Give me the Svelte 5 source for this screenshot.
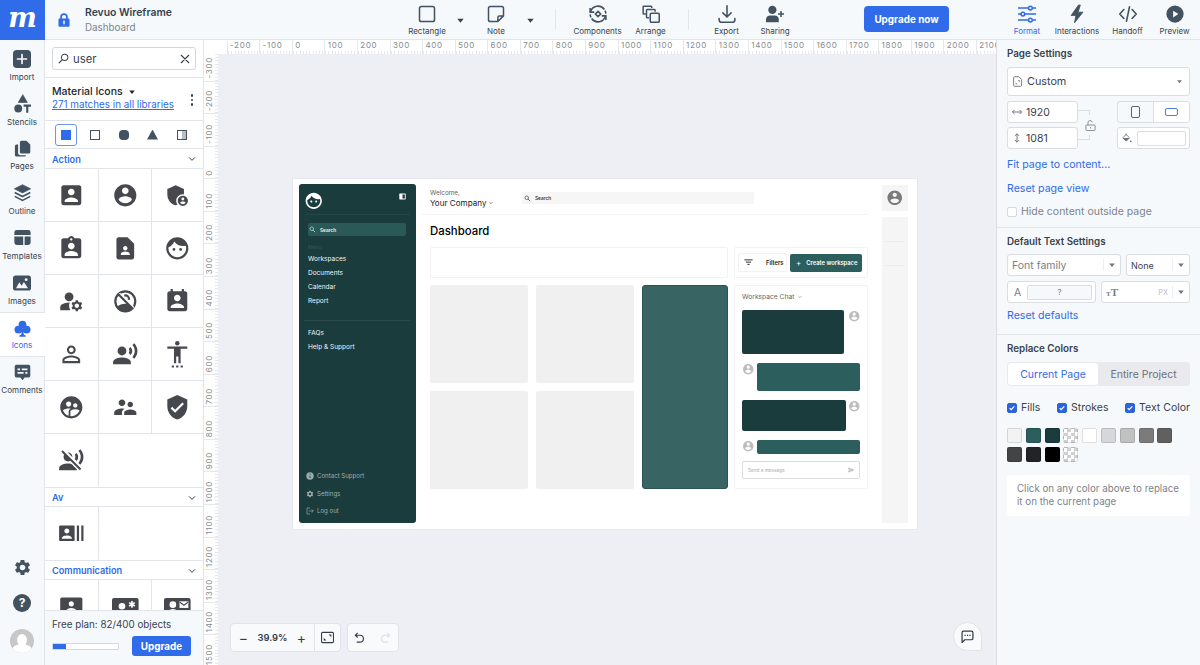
<script lang="ts">
  const icons: Record<string, string> = {
    accountBox:
      '<path d="M3 5v14c0 1.1.89 2 2 2h14c1.1 0 2-.9 2-2V5c0-1.1-.9-2-2-2H5c-1.11 0-2 .9-2 2zm12 4c0 1.66-1.34 3-3 3s-3-1.34-3-3 1.34-3 3-3 3 1.34 3 3zm-9 8c0-2 4-3.1 6-3.1s6 1.1 6 3.1v1H6v-1z"/>',
    accountCircle:
      '<path d="M12 2C6.48 2 2 6.48 2 12s4.48 10 10 10 10-4.48 10-10S17.52 2 12 2zm0 3c1.66 0 3 1.34 3 3s-1.34 3-3 3-3-1.34-3-3 1.34-3 3-3zm0 14.2c-2.5 0-4.71-1.28-6-3.22.03-1.99 4-3.08 6-3.08 1.99 0 5.97 1.09 6 3.08-1.29 1.94-3.5 3.22-6 3.22z"/>',
    adminPanel:
      '<path d="M17 11c.34 0 .67.04 1 .09V6.27L10.5 3 3 6.27v4.91c0 4.54 3.2 8.79 7.5 9.82.55-.13 1.08-.32 1.6-.55-.69-.98-1.1-2.17-1.1-3.45 0-3.31 2.69-6 6-6z"/><path d="M17 12.4c-2.54 0-4.6 2.06-4.6 4.6s2.06 4.6 4.6 4.6 4.6-2.06 4.6-4.6-2.06-4.6-4.6-4.6zm0 1.7c.72 0 1.3.6 1.3 1.3s-.58 1.3-1.3 1.3-1.3-.58-1.3-1.3.58-1.3 1.3-1.3zm0 5.9c-1.05 0-1.97-.5-2.5-1.3.05-.8 1.7-1.2 2.5-1.2s2.45.4 2.5 1.2c-.53.8-1.45 1.3-2.5 1.3z"/>',
    assignmentInd:
      '<path d="M19 3h-4.18C14.4 1.84 13.3 1 12 1c-1.3 0-2.4.84-2.82 2H5c-1.1 0-2 .9-2 2v14c0 1.1.9 2 2 2h14c1.1 0 2-.9 2-2V5c0-1.1-.9-2-2-2zm-7 0c.55 0 1 .45 1 1s-.45 1-1 1-1-.45-1-1 .45-1 1-1zm0 4c1.66 0 3 1.34 3 3s-1.34 3-3 3-3-1.34-3-3 1.34-3 3-3zm6 12H6v-1.4c0-2 4-3.1 6-3.1s6 1.1 6 3.1V19z"/>',
    contactPage:
      '<path d="M14 2H6c-1.1 0-2 .9-2 2v16c0 1.1.89 2 1.99 2H18c1.1 0 2-.9 2-2V8l-6-6zm-2 8c1.1 0 2 .9 2 2s-.9 2-2 2-2-.9-2-2 .9-2 2-2zm4 8H8v-.57c0-.81.48-1.53 1.22-1.85.85-.37 1.79-.58 2.78-.58.99 0 1.93.21 2.78.58.74.32 1.22 1.04 1.22 1.85V18z"/>',
    face:
      '<path d="M9 11.75c-.69 0-1.25.56-1.25 1.25s.56 1.25 1.25 1.25 1.25-.56 1.25-1.25-.56-1.25-1.25-1.25zm6 0c-.69 0-1.25.56-1.25 1.25s.56 1.25 1.25 1.25 1.25-.56 1.25-1.25-.56-1.25-1.25-1.25zM12 2C6.48 2 2 6.48 2 12s4.48 10 10 10 10-4.48 10-10S17.52 2 12 2zm0 18c-4.41 0-8-3.59-8-8 0-.29.02-.58.05-.86 2.36-1.05 4.23-2.98 5.21-5.37C11.07 8.33 14.05 10 17.42 10c.78 0 1.53-.09 2.25-.26.21.71.33 1.47.33 2.26 0 4.41-3.59 8-8 8z"/>',
    manageAccounts:
      '<circle cx="10" cy="8" r="4"/><path d="M10.67 13.02C10.45 13.01 10.23 13 10 13c-2.42 0-4.68.67-6.61 1.82C2.51 15.34 2 16.32 2 17.35V20h9.26c-.79-1.13-1.26-2.51-1.26-4 0-1.07.25-2.07.67-2.98zM20.75 16c0-.22-.03-.42-.06-.63l1.14-1.01-1-1.73-1.45.49c-.32-.27-.68-.48-1.08-.63L18 11h-2l-.3 1.49c-.4.15-.76.36-1.08.63l-1.45-.49-1 1.73 1.14 1.01c-.03.21-.06.41-.06.63s.03.42.06.63l-1.14 1.01 1 1.73 1.45-.49c.32.27.68.48 1.08.63L16 21h2l.3-1.49c.4-.15.76-.36 1.08-.63l1.45.49 1-1.73-1.14-1.01c.03-.21.06-.41.06-.63zM17 18c-1.1 0-2-.9-2-2s.9-2 2-2 2 .9 2 2-.9 2-2 2z"/>',
    noAccounts:
      '<circle cx="12" cy="12" r="9" fill="none" stroke="currentColor" stroke-width="2"/><path d="M4.6 17.2C6.5 15.4 9 14.3 12 14.3c1 0 1.9.1 2.8.3l3.7 3.7c-1.5 1.9-3.900 3-6.500 3-3 0-5.700-1.600-7.400-4.100z"/><path d="M11.1 6.900c2.400-.9 4.700 1.300 4 3.800" fill="none" stroke="currentColor" stroke-width="1.9"/><path d="M6.6 4.800l13 13" stroke="#fff" stroke-width="1.7"/><path d="M5.2 5.200l13.600 13.600" stroke="currentColor" stroke-width="2"/>',
    contactCalendar:
      '<path d="M19 3h-1V1h-2v2H8V1H6v2H5c-1.11 0-2 .9-2 2v14c0 1.1.89 2 2 2h14c1.1 0 2-.9 2-2V5c0-1.1-.9-2-2-2zm-7 3c1.66 0 3 1.34 3 3s-1.34 3-3 3-3-1.34-3-3 1.34-3 3-3zm6 12H6v-1c0-2 4-3.1 6-3.1s6 1.1 6 3.1v1z"/>',
    identity:
      '<path d="M12 5.9c1.16 0 2.1.94 2.1 2.1s-.94 2.1-2.1 2.1S9.9 9.16 9.9 8s.94-2.1 2.1-2.1m0 9c2.97 0 6.1 1.46 6.1 2.1v1.1H5.9V17c0-.64 3.13-2.1 6.1-2.1M12 4C9.79 4 8 5.79 8 8s1.79 4 4 4 4-1.79 4-4-1.79-4-4-4zm0 9c-2.67 0-8 1.34-8 4v3h16v-3c0-2.66-5.33-4-8-4z"/>',
    voiceOver:
      '<circle cx="9" cy="9" r="4"/><path d="M9 15c-2.67 0-8 1.34-8 4v2h16v-2c0-2.66-5.33-4-8-4zm7.76-9.64l-1.68 1.69c.84 1.18.84 2.71 0 3.89l1.68 1.69c2.02-2.02 2.02-5.07 0-7.27zM20.07 2l-1.63 1.63c2.77 3.02 2.77 7.56 0 10.74L20.07 16c3.9-3.89 3.91-9.95 0-14z"/>',
    accessibility:
      '<circle cx="12" cy="2" r="2"/><path d="M21 5H3v2h6v13h2v-6h2v6h2V7h6V5zM7 24h2v-2H7v2zm4 0h2v-2h-2v2zm4 0h2v-2h-2v2z"/>',
    supervised:
      '<path d="M11.99 2c-5.52 0-10 4.48-10 10s4.48 10 10 10 10-4.48 10-10-4.48-10-10-10zm3.61 6.34c1.07 0 1.93.86 1.93 1.93s-.86 1.93-1.93 1.93-1.93-.86-1.93-1.93c-.01-1.07.86-1.93 1.93-1.93zm-6-1.58c1.3 0 2.36 1.06 2.36 2.36s-1.06 2.36-2.36 2.36-2.36-1.06-2.36-2.36c0-1.31 1.05-2.36 2.36-2.36zm0 9.13v3.75c-2.4-.75-4.3-2.6-5.14-4.96 1.05-1.12 3.67-1.69 5.14-1.69.53 0 1.2.08 1.9.22-1.64.87-1.9 2.02-1.9 2.68zM11.99 20c-.27 0-.53-.01-.79-.04v-4.07c0-1.42 2.94-2.13 4.4-2.13 1.07 0 2.92.39 3.84 1.15-1.17 2.97-4.06 5.09-7.45 5.09z"/>',
    supervisor:
      '<path d="M16.5 12c1.38 0 2.49-1.12 2.49-2.5S17.88 7 16.5 7 14 8.12 14 9.5s1.12 2.5 2.5 2.5zM9 11c1.66 0 2.99-1.34 2.99-3S10.66 5 9 5 6 6.34 6 8s1.34 3 3 3zm7.5 3c-1.83 0-5.5.92-5.5 2.75V19h11v-2.25c0-1.83-3.67-2.75-5.5-2.75zM9 13c-2.33 0-7 1.17-7 3.5V19h7v-2.25c0-.85.33-2.34 2.37-3.47C10.5 13.1 9.66 13 9 13z"/>',
    verified:
      '<path d="M12 1L3 5v6c0 5.55 3.84 10.74 9 12 5.16-1.26 9-6.45 9-12V5l-9-4zm-2 16l-4-4 1.41-1.41L10 14.17l6.59-6.59L18 9l-8 8z"/>',
    voiceOff:
      '<path d="M9 5a4 4 0 0 1 4 4v.2L8.8 5zM6.89 5.62L4.27 3 3 4.27l2.62 2.62C5.23 7.5 5 8.22 5 9c0 2.21 1.79 4 4 4 .78 0 1.5-.23 2.11-.62L19.73 21 21 19.73l-8.62-8.62zM9 15c-2.67 0-8 1.34-8 4v2h16v-1l-4.5-4.5C11.2 15.1 10 15 9 15zm7.76-9.64l-1.68 1.69c.84 1.18.84 2.71 0 3.89l1.68 1.69c2.02-2.02 2.02-5.07 0-7.27zM20.07 2l-1.63 1.63c2.77 3.02 2.77 7.56 0 10.74L20.07 16c3.9-3.89 3.91-9.95 0-14z"/>',
    recentActors:
      '<path d="M21 5v14h2V5h-2zm-4 14h2V5h-2v14zM14 5H2c-.55 0-1 .45-1 1v12c0 .55.45 1 1 1h12c.55 0 1-.45 1-1V6c0-.55-.45-1-1-1zM8 7.75c1.24 0 2.25 1.01 2.25 2.25S9.24 12.25 8 12.25 5.75 11.24 5.75 10 6.76 7.75 8 7.75zM12.5 17h-9v-.75c0-1.5 3-2.25 4.5-2.25s4.5.75 4.5 2.25V17z"/>',
    contacts:
      '<rect x="2" y="4" width="20" height="16" rx="1.5"/><circle cx="12" cy="9.8" r="2.3" fill="#fff"/><path d="M7.5 17v-1.200c0-1.500 3-2.300 4.500-2.300s4.500.8 4.500 2.300V17z" fill="#fff"/>',
    contactEmergency:
      '<rect x="0" y="4.500" width="24" height="17" rx="1.8"/><circle cx="9" cy="12" r="3" fill="#fff"/><path d="M3 20c0-2.500 4-4 6-4s6 1.500 6 4z" fill="#fff"/><path d="M18 7.200v6M15.400 8.700l5.200 3M20.600 8.700l-5.200 3" stroke="#fff" stroke-width="1.5"/>',
    contactMail:
      '<rect x="0" y="4.500" width="24" height="17" rx="1.8"/><circle cx="8" cy="10.500" r="3" fill="#fff"/><path d="M2 18.500c0-2.500 4-4 6-4s6 1.500 6 4z" fill="#fff"/><path d="M14 7.500h8v6h-8z" fill="#fff"/><path d="M14.400 8.300l3.600 2.700 3.600-2.700" fill="none" stroke="#46484d"/>',
    gear:
      '<path d="M19.14 12.94c.04-.3.06-.61.06-.94 0-.32-.02-.64-.07-.94l2.03-1.58c.18-.14.23-.41.12-.61l-1.92-3.32c-.12-.22-.37-.29-.59-.22l-2.39.96c-.5-.38-1.03-.7-1.62-.94l-.36-2.54c-.04-.24-.24-.41-.48-.41h-3.84c-.24 0-.43.17-.47.41l-.36 2.54c-.59.24-1.13.57-1.62.94l-2.39-.96c-.22-.08-.47 0-.59.22L2.74 8.87c-.12.21-.08.47.12.61l2.03 1.58c-.05.3-.09.63-.09.94s.02.64.07.94l-2.03 1.58c-.18.14-.23.41-.12.61l1.92 3.32c.12.22.37.29.59.22l2.39-.96c.5.38 1.03.7 1.62.94l.36 2.54c.05.24.24.41.48.41h3.84c.24 0 .44-.17.47-.41l.36-2.54c.59-.24 1.13-.56 1.62-.94l2.39.96c.22.08.47 0 .59-.22l1.92-3.32c.12-.22.07-.47-.12-.61l-2.01-1.58zM12 15.6c-1.98 0-3.6-1.62-3.6-3.6s1.62-3.6 3.6-3.6 3.6 1.62 3.6 3.6-1.62 3.6-3.6 3.6z"/>',
    info: '<circle cx="12" cy="12" r="11"/><path d="M12 5v3M12 11v7" stroke="#1b3c3d" stroke-width="2.5"/>',
    logout: '<path d="M12 3H3v18h9M8 12h14M17 7l5 5-5 5" fill="none" stroke="currentColor" stroke-width="2"/>',
    search:
      '<circle cx="9.5" cy="9.5" r="6" fill="none" stroke="currentColor" stroke-width="2"/><path d="M14 14l7 7" stroke="currentColor" stroke-width="2.4"/>',
    searchLeft:
      '<circle cx="14.5" cy="9.5" r="7" fill="none" stroke="currentColor" stroke-width="2.2"/><path d="M9.5 14.500L2.500 21.500" stroke="currentColor" stroke-width="2.6" stroke-linecap="round"/>',
    close: '<path d="M3 3l18 18M21 3L3 21" stroke="currentColor" stroke-width="2.7" stroke-linecap="round"/>',
    chevron:
      '<path d="M4 8l8 8 8-8" fill="none" stroke="currentColor" stroke-width="3" stroke-linecap="round" stroke-linejoin="round"/>',
    caret: '<path d="M1 6h22L12 20z"/>',
    lock:
      '<path d="M7 11V7a5 5 0 0 1 10 0v4" fill="none" stroke="currentColor" stroke-width="3"/><rect x="2.5" y="9.5" width="19" height="14" rx="2"/><path d="M12 14v4.500" stroke="#fff" stroke-width="2.5" stroke-linecap="round"/>',
    import:
      '<rect x="0" y="0" width="24" height="24" rx="5"/><path d="M12 6v12M6 12h12" stroke="#f6f9fb" stroke-width="2.2" stroke-linecap="round"/>',
    stencils:
      '<path d="M12.400-.5L18.800 10.500H6z" stroke="currentColor" stroke-linejoin="round"/><circle cx="6" cy="19" r="5.6"/><path d="M13.500 15h10.500M18.700 15v10" stroke="currentColor" stroke-width="3"/>',
    pages:
      '<path d="M10.500 1h7L23 6.500V17a2.200 2.200 0 0 1-2.200 2.200H10.500A2.200 2.200 0 0 1 8.300 17V3.200A2.200 2.200 0 0 1 10.500 1z"/><path d="M5.800 6.500H3.500A2.200 2.200 0 0 0 1.300 8.700V21a2.200 2.200 0 0 0 2.200 2.200h11.300a2.200 2.200 0 0 0 2.200-1.700H9.500a3.700 3.700 0 0 1-3.700-3.700z"/>',
    outline:
      '<path d="M12 1l11.500 5.800L12 12.600.5 6.800z" stroke="currentColor" stroke-linejoin="round"/><path d="M1 12l11 5.600L23 12M1 17.500l11 5.600 11-5.600" fill="none" stroke="currentColor" stroke-width="2.3"/>',
    templates:
      '<path d="M4 1.500h16A3.500 3.500 0 0 1 23.500 5v3.500H.5V5A3.500 3.500 0 0 1 4 1.500zM.5 10.500H13v12H4A3.500 3.500 0 0 1 .5 19zM15 10.500h8.500V19a3.500 3.500 0 0 1-3.500 3.500h-5z"/>',
    images:
      '<rect x="0" y="2" width="24" height="20" rx="3.5"/><path d="M4 19l4.500-8 3 4.500 3-5L20 19z" fill="#f6f9fb"/><circle cx="17.5" cy="7.5" r="1.9" fill="#f6f9fb"/>',
    club:
      '<circle cx="12" cy="6.5" r="5.5"/><circle cx="6.2" cy="13.5" r="5.5"/><circle cx="17.8" cy="13.5" r="5.5"/><path d="M10.500 12h3v7.500c0 1.200 1.500 2 3 2.500v1.500h-9V22c1.500-.5 3-1.300 3-2.500z"/>',
    comments:
      '<path d="M3.500 1h17A2.500 2.500 0 0 1 23 3.500v13a2.500 2.500 0 0 1-2.500 2.500H15l-3 4-3-4H3.500A2.500 2.500 0 0 1 1 16.500v-13A2.500 2.500 0 0 1 3.500 1z"/><path d="M5 7.500h3.500M11 7.500h8M5 12.500h8.500M16 12.500h3" stroke="#f6f9fb" stroke-width="2.3"/>',
    rectangle:
      '<rect x="2" y="2" width="20" height="20" rx="2.5" fill="none" stroke="currentColor" stroke-width="2"/>',
    note:
      '<path d="M4.500 2h15A2.500 2.500 0 0 1 22 4.500v10L14.500 22h-10A2.500 2.500 0 0 1 2 19.500v-15A2.500 2.500 0 0 1 4.500 2zM14.500 22v-5.500a2 2 0 0 1 2-2H22" fill="none" stroke="currentColor" stroke-width="2" stroke-linejoin="round"/>',
    components:
      '<g fill="none" stroke="currentColor" stroke-width="2.1"><path d="M2 9.500A10.300 10.300 0 0 1 20.500 6M22 14.500A10.300 10.300 0 0 1 3.500 18M1.500 12.500c.1 1.500.5 2.800 1.200 4M22.500 11.500c-.1-1.500-.5-2.800-1.200-4"/><path d="M1.500 4v5.500H7M22.500 20v-5.500H17"/><path d="M12 8.500l3.500 3.500-3.500 3.500L8.500 12z"/></g>',
    arrange:
      '<g fill="none" stroke="currentColor" stroke-width="2"><path d="M5 12H2.500a1 1 0 0 1-1-1V2.500a1 1 0 0 1 1-1H12a1 1 0 0 1 1 1V4"/><path d="M9.500 17H7a1 1 0 0 1-1-1V7a1 1 0 0 1 1-1h9.500a1 1 0 0 1 1 1v2"/><rect x="11" y="11" width="12" height="12" rx="1.5"/></g>',
    export:
      '<path d="M12 1v14.500M6.500 10.500L12 16l5.500-5.500M1.500 18v1.500A3.500 3.500 0 0 0 5 23h14a3.500 3.500 0 0 0 3.500-3.500V18" fill="none" stroke="currentColor" stroke-width="2.1" stroke-linecap="round"/>',
    sharing:
      '<circle cx="8.5" cy="6.5" r="5.5"/><path d="M0 23v-4c0-3 2.500-5 5.500-5h6c3 0 5.500 2 5.500 5v4z"/><path d="M20 8v8M16 12h8" stroke="currentColor" stroke-width="2"/>',
    format:
      '<g fill="none" stroke="currentColor" stroke-width="2"><path d="M0 4h14M19 4h5M0 12h4M9 12h15M0 20h14M19 20h5"/><circle cx="16.5" cy="4" r="2.5"/><circle cx="6.5" cy="12" r="2.500"/><circle cx="16.5" cy="20" r="2.5"/></g>',
    bolt: '<path d="M14 0L4 14h6.500L8.500 24 20 9.500h-6.500L16.500 0z" stroke="currentColor" stroke-linejoin="round"/>',
    code:
      '<path d="M6.500 6L1 12l5.500 6M17.500 6L23 12l-5.500 6M14 2.500L10 21.500" fill="none" stroke="currentColor" stroke-width="2.2" stroke-linecap="round" stroke-linejoin="round"/>',
    play: '<circle cx="12" cy="12" r="11.5"/><path d="M9.500 7.500v9l7-4.500z" fill="#f6f9fb"/>',
    undo: '<path d="M8 2L3 7l5 5M3.500 7H13a7.500 7.500 0 0 1 0 15H6" fill="none" stroke="currentColor" stroke-width="2.5"/>',
    redo: '<path d="M16 2l5 5-5 5M20.500 7H11a7.500 7.500 0 0 0 0 15h7" fill="none" stroke="currentColor" stroke-width="2.5"/>',
    fit:
      '<rect x="1" y="2.5" width="22" height="19" rx="2" fill="none" stroke="currentColor" stroke-width="2"/><path d="M14 6.500h5v5zM10 17.500H5v-5z"/>',
    chat:
      '<path d="M5 2h14a3 3 0 0 1 3 3v10a3 3 0 0 1-3 3H7l-5 5V5a3 3 0 0 1 3-3z" fill="none" stroke="currentColor" stroke-width="2.3" stroke-linejoin="round"/><path d="M6.500 10h2.200M11 10h2.200M15.500 10h2.200" stroke="currentColor" stroke-width="2.3"/>',
    send: '<path d="M2 4l20 8-20 8 4-8zM6 12h14" fill="none" stroke="currentColor" stroke-width="3"/>',
    filter: '<path d="M1 5h22M5 11h14M9 17h6" stroke="currentColor" stroke-width="2.5"/>',
    panel: '<rect x="1" y="2" width="22" height="20" rx="2"/><path d="M12 5h8v14h-8z" fill="#1b3c3d"/>',
    file:
      '<path d="M6 1.500h9L21 7.500V20a2.500 2.500 0 0 1-2.500 2.500H6A2.500 2.500 0 0 1 3.500 20V4A2.500 2.500 0 0 1 6 1.500z" fill="none" stroke="currentColor" stroke-width="2"/><path d="M8 18v-4l4 4zM17 9v4.500L12.500 9z"/>',
    widthArrow:
      '<path d="M1 12h22M6 7l-5 5 5 5M18 7l5 5-5 5" fill="none" stroke="currentColor" stroke-width="2.3"/>',
    heightArrow:
      '<path d="M12 2v20M7 7l5-5 5 5M7 17l5 5 5-5" fill="none" stroke="currentColor" stroke-width="2.3"/>',
    unlock:
      '<rect x="2" y="11" width="20" height="12" rx="1.5" fill="none" stroke="currentColor" stroke-width="2"/><path d="M6.500 11V6a4.700 4.700 0 0 1 9.300-1M12 15.500v3" fill="none" stroke="currentColor" stroke-width="2"/>',
    bucket:
      '<path d="M10 3.500l8 8-8 8-8-8z" fill="none" stroke="currentColor" stroke-width="2"/><path d="M2 12h16l-8 8zM8.500 1v5h2V1z"/><circle cx="21" cy="20" r="2.2"/>',
    check: '<path d="M5 12.500l4.500 4.500L19 7" fill="none" stroke="#fff" stroke-width="3.6"/>'
  }

  const rail = [
    { label: 'Import', icon: 'import' },
    { label: 'Stencils', icon: 'stencils' },
    { label: 'Pages', icon: 'pages' },
    { label: 'Outline', icon: 'outline' },
    { label: 'Templates', icon: 'templates' },
    { label: 'Images', icon: 'images' },
    { label: 'Icons', icon: 'club' },
    { label: 'Comments', icon: 'comments' }
  ]

  const groups = [
    {
      name: 'Action',
      items: [
        'accountBox', 'accountCircle', 'adminPanel',
        'assignmentInd', 'contactPage', 'face',
        'manageAccounts', 'noAccounts', 'contactCalendar',
        'identity', 'voiceOver', 'accessibility',
        'supervised', 'supervisor', 'verified',
        'voiceOff'
      ]
    },
    { name: 'Av', items: ['recentActors'] },
    { name: 'Communication', items: ['contacts', 'contactEmergency', 'contactMail'] }
  ]

  const xMarks = Array.from({ length: 24 }, (_, i) => (i - 2) * 100)
  const yMarks = Array.from({ length: 19 }, (_, i) => (i - 3) * 100)

  const swatches = [
    '#f3f3f3', '#2c5e5d', '#1b3c3d', '', '#ffffff', '#d6d7d8', '#c0c1c1', '#7b7b7c', '#606061',
    '#444444', '#222324', '#000000', ''
  ]

  let active = $state('Icons')
  let query = $state('user')
  let scope = $state('Current Page')
</script>

{#snippet icon(name: string, size: number)}
  <svg class="icon" width={size} height={size} viewBox="0 0 24 24" aria-hidden="true">{@html icons[name]}</svg>
{/snippet}

{#snippet tool(label: string, name: string, selected = false)}
  <button class="tool" class:selected>
    {@render icon(name, 18)}
    <span>{label}</span>
  </button>
{/snippet}

<div class="app">
  <header>
    <div class="logo">m</div>
    <div class="project">
      <span class="lock">{@render icon('lock', 14)}</span>
      <div>
        <strong>Revuo Wireframe</strong>
        <small>Dashboard</small>
      </div>
    </div>
    {@render tool('Rectangle', 'rectangle')}
    <span class="drop">{@render icon('caret', 7)}</span>
    {@render tool('Note', 'note')}
    <span class="drop">{@render icon('caret', 7)}</span>
    <i class="rule"></i>
    {@render tool('Components', 'components')}
    {@render tool('Arrange', 'arrange')}
    <i class="rule"></i>
    {@render tool('Export', 'export')}
    {@render tool('Sharing', 'sharing')}
    <button class="primary upgrade-now">Upgrade now</button>
    {@render tool('Format', 'format', true)}
    {@render tool('Interactions', 'bolt')}
    {@render tool('Handoff', 'code')}
    {@render tool('Preview', 'play')}
  </header>

  <div class="workspace">
    <nav class="rail">
      {#each rail as item (item.label)}
        <button class:active={active === item.label} onclick={() => (active = item.label)}>
          {@render icon(item.icon, item.icon === 'import' || item.icon === 'images' ? 18 : 17)}
          <span>{item.label}</span>
        </button>
      {/each}
      <div class="rail-end">
        {@render icon('gear', 19)}
        <span class="help">?</span>
        <span class="avatar"><i></i><b></b></span>
      </div>
    </nav>

    <aside class="library">
      <div class="search-row">
        <label class="search">
          {@render icon('searchLeft', 11)}
          <input bind:value={query} aria-label="Search icons" />
          {@render icon('close', 10)}
        </label>
      </div>
      <div class="source">
        <div>
          <h2>Material Icons {@render icon('caret', 6)}</h2>
          <a href="#all">271 matches in all libraries</a>
        </div>
        <span class="dots"><i></i><i></i><i></i></span>
      </div>
      <div class="styles">
        <span class="style-on"><i class="shape"></i></span>
        <span><i class="shape hollow"></i></span>
        <span><i class="shape round"></i></span>
        <span><i class="shape triangle"></i></span>
        <span><i class="shape hollow two-tone"></i></span>
      </div>
      <div class="results">
        {#each groups as group (group.name)}
          <h3>{group.name} {@render icon('chevron', 8)}</h3>
          <div class="icon-grid">
            {#each group.items as name (name)}
              <span class="cell">{@render icon(name, 26.6)}</span>
            {/each}
          </div>
        {/each}
      </div>
      <footer>
        <p>Free plan: 82/400 objects</p>
        <div class="plan">
          <span class="meter"><i></i></span>
          <button class="primary">Upgrade</button>
        </div>
      </footer>
    </aside>

    <main class="canvas">
      <div class="ruler-x">
        {#each xMarks as mark (mark)}<span>{mark}</span>{/each}
      </div>
      <div class="ruler-y">
        {#each yMarks as mark (mark)}<span><b>{mark}</b></span>{/each}
      </div>
      <div class="stage">
        <div class="artboard">
          <div class="side">
            <div class="side-top">
              {@render icon('face', 19.5)}
              {@render icon('panel', 7)}
            </div>
            <div class="side-search">{@render icon('search', 7)} Search</div>
            <small>Menu</small>
            <ul>
              <li>Workspaces</li>
              <li>Documents</li>
              <li>Calendar</li>
              <li>Report</li>
            </ul>
            <hr />
            <ul>
              <li>FAQs</li>
              <li>Help &amp; Support</li>
            </ul>
            <ul class="account">
              <li>{@render icon('info', 8)} Contact Support</li>
              <li>{@render icon('gear', 8)} Settings</li>
              <li>{@render icon('logout', 8)} Log out</li>
            </ul>
          </div>

          <div class="board">
            <div class="board-head">
              <div class="company">
                <small>Welcome,</small>
                <span>Your Company {@render icon('chevron', 4)}</span>
              </div>
              <div class="board-search">{@render icon('search', 7)} Search</div>
            </div>
            <h1>Dashboard</h1>
            <div class="panels">
              <div class="outlined"></div>
              <div class="outlined actions">
                <span class="filters">{@render icon('filter', 9)} Filters</span>
                <span class="create"><b>+</b> Create workspace</span>
              </div>
              <div class="tiles">
                <i></i>
                <i></i>
                <i class="tall"></i>
                <i></i>
                <i></i>
              </div>
              <div class="outlined chat">
                <p>Workspace Chat {@render icon('chevron', 4)}</p>
                <div class="message first"><i></i>{@render icon('accountCircle', 12.5)}</div>
                <div class="message">{@render icon('accountCircle', 12.5)}<i></i></div>
                <div class="message third"><i></i>{@render icon('accountCircle', 12.5)}</div>
                <div class="message fourth">{@render icon('accountCircle', 12.5)}<i></i></div>
                <div class="compose">Send a message {@render icon('send', 6)}</div>
              </div>
            </div>
          </div>

          <div class="strip">
            <div class="me">{@render icon('accountCircle', 17.5)}</div>
            <div class="slots"><i></i><i></i></div>
          </div>
        </div>

        <div class="controls">
          <div class="pill">
            <b class="sign">−</b>
            <strong>39.9%</strong>
            <b class="sign">+</b>
            <span class="fit">{@render icon('fit', 13)}</span>
          </div>
          <div class="pill history">
            {@render icon('undo', 11)}
            <span>{@render icon('redo', 11)}</span>
          </div>
        </div>
        <button class="feedback" aria-label="Chat">{@render icon('chat', 13)}</button>
      </div>
    </main>

    <aside class="inspector">
      <section class="page-settings">
        <h2>Page Settings</h2>
        <div class="field preset">{@render icon('file', 11)} Custom <span class="end">{@render icon('caret', 5)}</span></div>
        <div class="size-grid">
          <div class="stack">
            <div class="field">{@render icon('widthArrow', 10)} 1920</div>
            <div class="field">{@render icon('heightArrow', 10)} 1081</div>
          </div>
          <div class="link"><i></i>{@render icon('unlock', 11)}<i></i></div>
          <div class="stack">
            <div class="field orient">
              <span><i class="portrait"></i></span>
              <span class="on"><i class="landscape"></i></span>
            </div>
            <div class="field fill">{@render icon('bucket', 10)}<i></i></div>
          </div>
        </div>
        <a href="#fit">Fit page to content...</a>
        <a href="#reset">Reset page view</a>
        <label class="hide"><i class="box"></i> Hide content outside page</label>
      </section>

      <section class="text-settings">
        <h2>Default Text Settings</h2>
        <div class="row family">
          <div class="field muted">Font family <span class="end split">{@render icon('caret', 6)}</span></div>
          <div class="field weight">None <span class="end split">{@render icon('caret', 6)}</span></div>
        </div>
        <div class="row color">
          <div class="field muted letter">A <i>?</i></div>
          <div class="field muted size">
            <span class="tt"><small>T</small>T</span>
            <em>PX</em>
            <span class="end split">{@render icon('caret', 6)}</span>
          </div>
        </div>
        <a href="#defaults">Reset defaults</a>
      </section>

      <section class="replace">
        <h2>Replace Colors</h2>
        <div class="tabs">
          {#each ['Current Page', 'Entire Project'] as tab}
            <button class:on={scope === tab} onclick={() => (scope = tab)}>{tab}</button>
          {/each}
        </div>
        <div class="checks">
          {#each ['Fills', 'Strokes', 'Text Color'] as label}
            <label><i class="box checked">{@render icon('check', 8)}</i> {label}</label>
          {/each}
        </div>
        <div class="swatches">
          {#each swatches as color}
            <i class:none={!color} style:background-color={color || null}></i>
          {/each}
        </div>
        <p>Click on any color above to replace it on the current page</p>
      </section>
    </aside>
  </div>
</div>

<style>
  :global(body) {
    overflow: hidden;
  }

  * {
    box-sizing: border-box;
  }

  .app {
    --ink: #38424d;
    --icon: #435260;
    --blue: #306be9;
    --line: #e1e4e8;
    --panel: #f6f9fb;
    display: grid;
    grid-template-rows: 40px 625px;
    width: 1200px;
    height: 665px;
    overflow: hidden;
    background: var(--panel);
    color: var(--ink);
    font-family: Inter, sans-serif;
    font-size: 10.5px;
  }

  h1,
  h2,
  h3,
  p,
  ul {
    margin: 0;
    padding: 0;
    list-style: none;
  }

  button,
  input {
    padding: 0;
    border: 0;
    background: none;
    color: inherit;
    font: inherit;
  }

  a {
    color: var(--blue);
    text-decoration: none;
  }

  .icon {
    flex: none;
    display: block;
    fill: currentColor;
    overflow: visible;
  }

  .primary {
    border-radius: 3px;
    background: var(--blue);
    color: #fff;
    font-weight: 700;
  }

  header {
    display: grid;
    grid-template-columns: 45px 362px 40px 26px 46px 22px 28px 57px 49px 26px 51px 46px 204px 50px 50px 51px 43px;
    border-bottom: 1px solid var(--line);
  }

  .logo {
    height: 40px;
    background: var(--blue);
    color: #fff;
    font: italic bold 27px/35px 'DejaVu Serif', serif;
    text-align: center;
  }

  .project {
    display: flex;
    align-items: center;
    gap: 14px;
    padding-left: 12px;
  }

  .project strong,
  .project small {
    display: block;
    line-height: 15px;
  }

  .project strong {
    font-size: 10.4px;
    font-weight: 600;
  }

  .project small {
    color: #7d848b;
    font-size: 9.8px;
  }

  .lock {
    color: var(--blue);
  }

  .tool {
    display: flex;
    flex-direction: column;
    align-items: center;
    padding-top: 5px;
    color: var(--icon);
  }

  .tool span {
    margin-top: 2px;
    color: var(--ink);
    font-size: 8px;
    line-height: 12px;
    white-space: nowrap;
  }

  .tool.selected,
  .tool.selected span {
    color: var(--blue);
  }

  .drop {
    display: grid;
    place-items: center;
    color: var(--ink);
  }

  .rule {
    width: 1px;
    height: 21px;
    margin: 9px auto 0;
    background: #e3e6ea;
  }

  .upgrade-now {
    width: 85px;
    height: 26px;
    margin: 6px 0 0 66px;
    border-radius: 4px;
    font-size: 9.9px;
  }

  .workspace {
    display: grid;
    grid-template-columns: 45px 159px 792px 204px;
    min-height: 0;
  }

  .rail {
    display: flex;
    flex-direction: column;
    padding-top: 3px;
    border-right: 1px solid var(--line);
  }

  .rail button {
    display: flex;
    flex-direction: column;
    align-items: center;
    width: 44px;
    height: 44.8px;
    padding-top: 7px;
    color: var(--icon);
  }

  .rail button span {
    margin-top: auto;
    margin-bottom: 5px;
    color: var(--ink);
    font-size: 8.1px;
    line-height: 11px;
  }

  .rail button.active {
    width: 45px;
    border: solid var(--line);
    border-width: 1px 0;
    padding-right: 1px;
    background: #fff;
  }

  .rail button.active,
  .rail button.active span {
    color: var(--blue);
  }

  .rail-end {
    display: flex;
    flex-direction: column;
    align-items: center;
    margin-top: auto;
    padding-bottom: 12px;
    color: var(--icon);
  }

  .help {
    width: 18px;
    height: 18px;
    margin: 17px 0;
    border-radius: 50%;
    background: var(--icon);
    color: #fff;
    font-size: 12px;
    font-weight: 700;
    line-height: 18px;
    text-align: center;
  }

  .avatar {
    display: flex;
    flex-direction: column;
    align-items: center;
    width: 24px;
    height: 24px;
    padding-top: 5px;
    overflow: hidden;
    border-radius: 50%;
    background: #c7c7c7;
  }

  .avatar i {
    flex: none;
    width: 10px;
    height: 12px;
    border-radius: 50%;
    background: #fff;
  }

  .avatar b {
    flex: none;
    width: 20px;
    height: 12px;
    margin-top: -2px;
    border-radius: 50%;
    background: #fff;
  }

  .library {
    display: grid;
    grid-template-columns: minmax(0, 1fr);
    grid-template-rows: 38px 43px 28px minmax(0, 1fr) 55px;
    min-height: 0;
    border-right: 1px solid var(--line);
    background: #fff;
  }

  .search-row,
  .source,
  .styles {
    border-bottom: 1px solid var(--line);
  }

  .search-row {
    padding: 7px 7px 0;
  }

  .search {
    display: flex;
    align-items: center;
    height: 23px;
    padding: 0 5px;
    border: 1px solid #d2d7dc;
    border-radius: 3px;
  }

  .search input {
    flex: 1;
    min-width: 0;
    width: 0;
    margin-left: 4px;
    outline: 0;
    font-size: 11.3px;
  }

  .source {
    display: flex;
    justify-content: space-between;
    padding: 7px 8px 0 7px;
  }

  .source h2 {
    display: flex;
    align-items: center;
    gap: 6px;
    color: #20262d;
    font-size: 10.5px;
    font-weight: 500;
    line-height: 13px;
  }

  .source a {
    display: block;
    font-size: 9.85px;
    line-height: 13px;
    text-decoration: underline;
    white-space: nowrap;
  }

  .dots {
    display: grid;
    align-content: start;
    gap: 2px;
    padding: 9px 2px 0 0;
  }

  .dots i {
    width: 2.5px;
    height: 2.5px;
    border-radius: 50%;
    background: var(--ink);
  }

  .styles {
    display: grid;
    grid-template-columns: repeat(5, 29px);
    align-items: center;
    padding-left: 6px;
  }

  .styles span {
    display: grid;
    place-items: center;
    height: 22px;
  }

  .styles .style-on {
    width: 22px;
    margin-left: 4px;
    border: 1px solid #6c96ee;
    border-radius: 3px;
  }

  .shape {
    width: 10px;
    height: 10px;
    background: var(--icon);
  }

  .style-on .shape {
    background: var(--blue);
  }

  .shape.hollow {
    border: 1.5px solid var(--icon);
    background: none;
  }

  .shape.round {
    border-radius: 4px;
  }

  .shape.triangle {
    clip-path: polygon(50% 0, 100% 100%, 0 100%);
    width: 11px;
  }

  .shape.two-tone {
    background: linear-gradient(90deg, #fff 45%, #b8bec4 45%);
  }

  .results {
    min-height: 0;
    overflow: hidden;
  }

  .results h3 {
    display: flex;
    align-items: center;
    justify-content: space-between;
    height: 19px;
    padding: 1px 7px 0;
    color: var(--blue);
    font-size: 9.2px;
    font-weight: 600;
  }

  .icon-grid + h3 {
    border-top: 1px solid var(--line);
  }

  .results h3 .icon {
    color: var(--ink);
  }

  .icon-grid {
    display: grid;
    grid-template-columns: 54px 53px 51px;
    grid-auto-rows: 53px;
    border-top: 1px solid var(--line);
  }

  .cell {
    display: grid;
    place-items: center;
    border-right: 1px solid var(--line);
    border-bottom: 1px solid var(--line);
    color: #46484d;
  }

  .cell:nth-child(3n) {
    border-right: 0;
  }

  .cell:last-child {
    border-bottom-color: transparent;
  }

  footer {
    padding: 7px 12px 0 7px;
    border-top: 1px solid var(--line);
    background: var(--panel);
  }

  footer p {
    font-size: 9.8px;
    line-height: 13px;
    white-space: nowrap;
  }

  .plan {
    display: flex;
    align-items: center;
    justify-content: space-between;
    margin-top: 5px;
  }

  .meter {
    width: 67px;
    height: 7px;
    border: 1px solid #d5d9dd;
    border-radius: 1px;
    background: #fff;
  }

  .meter i {
    display: block;
    width: 13px;
    height: 5px;
    background: var(--blue);
  }

  .plan .primary {
    width: 59px;
    height: 20px;
    font-size: 9.9px;
  }

  .canvas {
    display: grid;
    grid-template-columns: 14px 778px;
    grid-template-rows: 14px 611px;
    overflow: hidden;
    background: #fff;
    color: #868b91;
    font-size: 8px;
    letter-spacing: 0.7px;
  }

  .ruler-x {
    grid-column: 2;
    display: flex;
    padding-left: 8.7px;
    overflow: hidden;
  }

  .ruler-x span {
    flex: none;
    width: 32.58px;
    padding-left: 2.3px;
    border-left: 1px solid #e6e8ec;
    background: repeating-linear-gradient(90deg, #e6e8ec 0 1px, transparent 1px 3.258px) 0 11px / 100% 3px no-repeat;
    line-height: 11px;
  }

  .ruler-y {
    grid-row: 2;
    overflow: hidden;
  }

  .ruler-y span {
    display: flex;
    align-items: flex-end;
    height: 32.58px;
    border-bottom: 1px solid #e6e8ec;
    background: repeating-linear-gradient(0deg, #e6e8ec 0 1px, transparent 1px 3.258px) 11px 0 / 3px 100% no-repeat;
  }

  .ruler-y span:first-child {
    height: 27.5px;
  }

  .ruler-y b {
    width: 10px;
    padding-top: 2px;
    font-weight: 400;
    line-height: 11px;
    writing-mode: vertical-rl;
    transform: rotate(180deg);
    white-space: nowrap;
  }

  .stage {
    position: relative;
    background: #eeeff4;
    letter-spacing: 0;
  }

  .artboard {
    position: absolute;
    left: 74px;
    top: 124px;
    display: flex;
    width: 626px;
    height: 352px;
    padding: 5px 9px 6px 6px;
    border: 1px solid #e6e8ed;
    background: #fff;
    color: #222;
    font-size: 6px;
  }

  .side {
    display: flex;
    flex-direction: column;
    width: 117px;
    height: 339px;
    padding: 0 10px 0 9px;
    border-radius: 3px;
    background: #1b3c3d;
    color: #eef3f3;
    font-size: 6.5px;
  }

  .side-top {
    display: flex;
    justify-content: space-between;
    height: 31px;
    margin: 0 -4px;
    padding: 7px 4px 0 0;
    border-bottom: 1px solid #234848;
    color: #fff;
  }

  .side-top .icon:last-child {
    margin-top: 2px;
  }

  .side-search {
    display: flex;
    align-items: center;
    gap: 4px;
    flex: none;
    height: 13px;
    margin: 8px 0 7px;
    padding-left: 1px;
    border-radius: 2px;
    background: #2a5958;
    font-size: 4.8px;
    font-weight: 600;
  }

  .side small {
    color: #365757;
    font-size: 5px;
    line-height: 9px;
  }

  .side li {
    height: 14px;
    line-height: 14px;
  }

  .side hr {
    width: 106px;
    margin: 12px 0 5px -4px;
    border: 0;
    border-top: 1px solid #2a4949;
  }

  .side .account {
    margin: auto 0 3px -2px;
    color: #9badad;
    font-size: 6.1px;
  }

  .side .account li {
    display: flex;
    align-items: center;
    gap: 3px;
    height: 17.5px;
  }

  .board {
    width: 452px;
    padding-left: 5px;
  }

  .board-head {
    display: flex;
    height: 31px;
    padding: 5px 0 0 9px;
    border-bottom: 1px solid #f4f4f4;
  }

  .company {
    width: 92px;
  }

  .company small {
    display: block;
    color: #666;
    font-size: 6.4px;
    line-height: 9px;
  }

  .company span {
    display: flex;
    align-items: center;
    gap: 3px;
    font-size: 8.1px;
    line-height: 10px;
  }

  .board-search {
    display: flex;
    align-items: center;
    gap: 4px;
    width: 232px;
    height: 12px;
    margin-top: 3px;
    padding-left: 2px;
    background: #f6f6f6;
    font-size: 4.8px;
    font-weight: 500;
  }

  .board h1 {
    margin: 9px 0 8px 9px;
    color: #000;
    font-size: 11.4px;
    font-weight: 500;
    line-height: 15px;
  }

  .panels {
    display: grid;
    grid-template-columns: 298px 134px;
    grid-template-rows: 31px 204px;
    gap: 7px 6px;
    margin-left: 9px;
  }

  .outlined {
    border: 1px solid #f2f2f2;
    border-radius: 2px;
  }

  .actions {
    display: flex;
    align-items: center;
    gap: 3px;
    padding-left: 3px;
    font-size: 5.8px;
    font-weight: 600;
    white-space: nowrap;
  }

  .filters {
    display: flex;
    align-items: center;
    gap: 13px;
    width: 49px;
    height: 19px;
    padding-left: 5px;
    border: 1px solid #f2f2f2;
    border-radius: 2px;
  }

  .create {
    display: flex;
    align-items: center;
    gap: 5px;
    width: 72px;
    height: 18px;
    padding-left: 6px;
    border-radius: 2px;
    background: #2c5e5d;
    color: #fff;
  }

  .create b {
    font-size: 8px;
    font-weight: 400;
  }

  .tiles {
    display: grid;
    grid-template-columns: 98px 98px 86px;
    grid-template-rows: 98px 98px;
    gap: 8px;
  }

  .tiles i {
    border-radius: 2px;
    background: #f0f0f0;
  }

  .tiles .tall {
    grid-column: 3;
    grid-row: 1 / 3;
    border: 1px solid #2b5354;
    border-radius: 3px;
    background: #386464;
  }

  .chat {
    padding: 6px 7px;
  }

  .chat p {
    display: flex;
    align-items: center;
    gap: 4px;
    height: 10px;
    color: #666;
    font-size: 6.7px;
  }

  .message {
    display: flex;
    justify-content: space-between;
    margin-bottom: 9px;
    color: #bdbdbd;
  }

  .message i {
    width: 103px;
    height: 28px;
    border-radius: 2px;
    background: #2c5e5d;
  }

  .first {
    margin-top: 8px;
  }

  .first i {
    width: 102px;
    height: 44px;
    background: #1b3c3d;
  }

  .third i {
    width: 104px;
    height: 31px;
    background: #1b3c3d;
  }

  .fourth i {
    height: 14px;
  }

  .fourth {
    margin-bottom: 7px;
  }

  .compose {
    display: flex;
    align-items: center;
    justify-content: space-between;
    height: 18px;
    padding: 0 5px;
    border: 1px solid #dcdcdc;
    border-radius: 2px;
    color: #aaa;
    font-size: 4.7px;
  }

  .strip {
    width: 26px;
    margin-left: 14px;
    padding-top: 1px;
    color: #7b7b7b;
  }

  .me {
    display: grid;
    place-items: center;
    height: 26px;
    background: #f5f5f5;
  }

  .slots {
    height: 306px;
    margin-top: 6px;
    background: #f5f5f5;
  }

  .slots i {
    display: block;
    height: 24.5px;
    margin: 0 3px;
    border-bottom: 1px solid #ececec;
  }

  .controls {
    position: absolute;
    left: 12px;
    bottom: 13px;
    display: flex;
    gap: 6px;
    color: #343d47;
  }

  .pill {
    display: flex;
    align-items: center;
    height: 29px;
    border: 1px solid #e1e3e8;
    border-radius: 4px;
    background: #f8fafc;
  }

  .pill strong {
    width: 33px;
    font-size: 9.4px;
    font-weight: 600;
    text-align: center;
  }

  .sign {
    width: 25px;
    font-size: 14px;
    font-weight: 400;
    line-height: 14px;
    text-align: center;
  }

  .fit {
    display: grid;
    place-items: center;
    width: 26px;
    height: 100%;
    border-left: 1px solid #e1e3e8;
  }

  .history {
    gap: 15px;
    width: 52px;
    padding-left: 6px;
  }

  .history span {
    color: #dde0e4;
  }

  .feedback {
    position: absolute;
    right: 14px;
    bottom: 14px;
    display: grid;
    place-items: center;
    width: 29px;
    height: 29px;
    border: 1px solid #e1e3e8;
    border-radius: 15px 15px 2px 15px;
    background: #f8fafc;
    color: #343d47;
  }

  .inspector {
    border-left: 1px solid #dadde3;
  }

  .inspector section {
    padding: 7px 10px 0;
    border-bottom: 1px solid #e3e5e9;
  }

  .inspector h2 {
    font-size: 9.8px;
    font-weight: 600;
    line-height: 14px;
    white-space: nowrap;
  }

  .inspector a {
    display: block;
    font-size: 10.6px;
    line-height: 14px;
  }

  .field {
    display: flex;
    align-items: center;
    gap: 4px;
    height: 22px;
    padding-left: 4px;
    border: 1px solid #dadde1;
    border-radius: 3px;
    background: #fff;
    font-size: 10.5px;
    white-space: nowrap;
  }

  .field .icon {
    color: #6d747b;
  }

  .end {
    margin-left: auto;
    padding-right: 7px;
  }

  .split {
    display: grid;
    align-items: center;
    height: 12px;
    padding: 0 5px;
    border-left: 1px solid #eceef1;
  }

  .muted {
    color: #777e86;
  }

  .page-settings {
    height: 188px;
  }

  .preset {
    height: 29px;
    margin: 6px 0 5px;
    font-size: 10.8px;
  }

  .size-grid {
    display: grid;
    grid-template-columns: 71px 39px 73px;
  }

  .stack {
    display: grid;
    grid-template-columns: minmax(0, 1fr);
    gap: 4px;
  }

  .link {
    display: grid;
    grid-template-rows: 8px 14px 8px;
    align-content: center;
    align-items: center;
    color: #80868d;
  }

  .link i {
    width: 12px;
    height: 5px;
    border: solid #dadde1;
    border-width: 1px 1px 0 0;
  }

  .link i:first-child {
    align-self: start;
  }

  .link i:last-child {
    align-self: end;
    border-width: 0 1px 1px 0;
  }

  .link .icon {
    margin-left: 7px;
  }

  .orient {
    gap: 0;
    padding: 0;
    background: var(--panel);
  }

  .orient span {
    display: grid;
    place-items: center;
    flex: 1;
    height: 20px;
  }

  .orient .on {
    border-left: 1px solid #dadde1;
    border-radius: 0 2px 2px 0;
    background: #fff;
  }

  .portrait {
    width: 9px;
    height: 12px;
    border: 1.5px solid #5b636b;
    border-radius: 2px;
  }

  .landscape {
    width: 13px;
    height: 8px;
    border: 1.5px solid #4d7deb;
    border-radius: 2px;
  }

  .fill i {
    flex: 1;
    height: 15px;
    margin: 0 3px 0 1px;
    border: 1px solid #dadde1;
    border-radius: 2px;
  }

  .page-settings a {
    margin-top: 10px;
  }

  .page-settings .size-grid + a {
    margin-top: 9px;
  }

  .hide {
    display: flex;
    align-items: center;
    gap: 4px;
    margin-top: 9px;
    color: #7c838b;
    line-height: 14px;
    white-space: nowrap;
  }

  .box {
    display: block;
    width: 10px;
    height: 10px;
    border: 1px solid #d6d9dd;
    border-radius: 2px;
    background: #fff;
  }

  .box.checked {
    border-color: #2a63dc;
    background: #2a63dc;
  }

  .text-settings {
    height: 107px;
  }

  .row {
    display: grid;
    gap: 5px;
  }

  .family {
    grid-template-columns: 114px 64px;
    margin-top: 5px;
  }

  .weight {
    color: var(--ink);
    font-size: 9px;
  }

  .color {
    grid-template-columns: 89px 89px;
    margin-top: 5px;
  }

  .letter {
    padding-left: 6px;
  }

  .letter i {
    flex: 1;
    height: 15px;
    margin: 0 3px 0 2px;
    border: 1px solid #dadde1;
    border-radius: 2px;
    background: var(--panel);
    font-size: 8px;
    font-style: normal;
    line-height: 13px;
    text-align: center;
  }

  .tt {
    font: bold 11px 'Liberation Serif', serif;
  }

  .tt small {
    font-size: 7px;
  }

  .size em {
    margin-left: auto;
    color: #b9bec4;
    font-size: 7.3px;
    font-style: normal;
  }

  .size .end {
    margin-left: 0;
  }

  .text-settings a {
    margin-top: 6px;
  }

  .inspector .replace {
    padding-top: 7px;
    border: 0;
  }

  .tabs {
    display: grid;
    grid-template-columns: 90px 1fr;
    height: 24px;
    margin-top: 6px;
    padding: 1px;
    border-radius: 4px;
    background: #e9e9ee;
    color: #6b7178;
  }

  .tabs .on {
    border-radius: 3px;
    background: #fff;
    color: var(--blue);
  }

  .checks {
    display: flex;
    justify-content: space-between;
    margin-top: 15px;
    line-height: 14px;
    white-space: nowrap;
  }

  .checks label {
    display: flex;
    align-items: center;
    gap: 4px;
  }

  .swatches {
    display: grid;
    grid-template-columns: repeat(9, 15px);
    grid-auto-rows: 15px;
    gap: 3.8px;
    margin-top: 13px;
  }

  .swatches i {
    border: 1px solid #0000001f;
    border-radius: 2px;
  }

  .swatches .none {
    background: repeating-conic-gradient(#d0d0d0 0 25%, #fff 0 50%) 0 0 / 7px 7px;
  }

  .replace p {
    margin-top: 13px;
    padding: 7px 8px 7px 10px;
    border-radius: 4px;
    background: #fff;
    color: #7c838b;
    font-size: 9.75px;
    line-height: 13.5px;
  }
</style>
